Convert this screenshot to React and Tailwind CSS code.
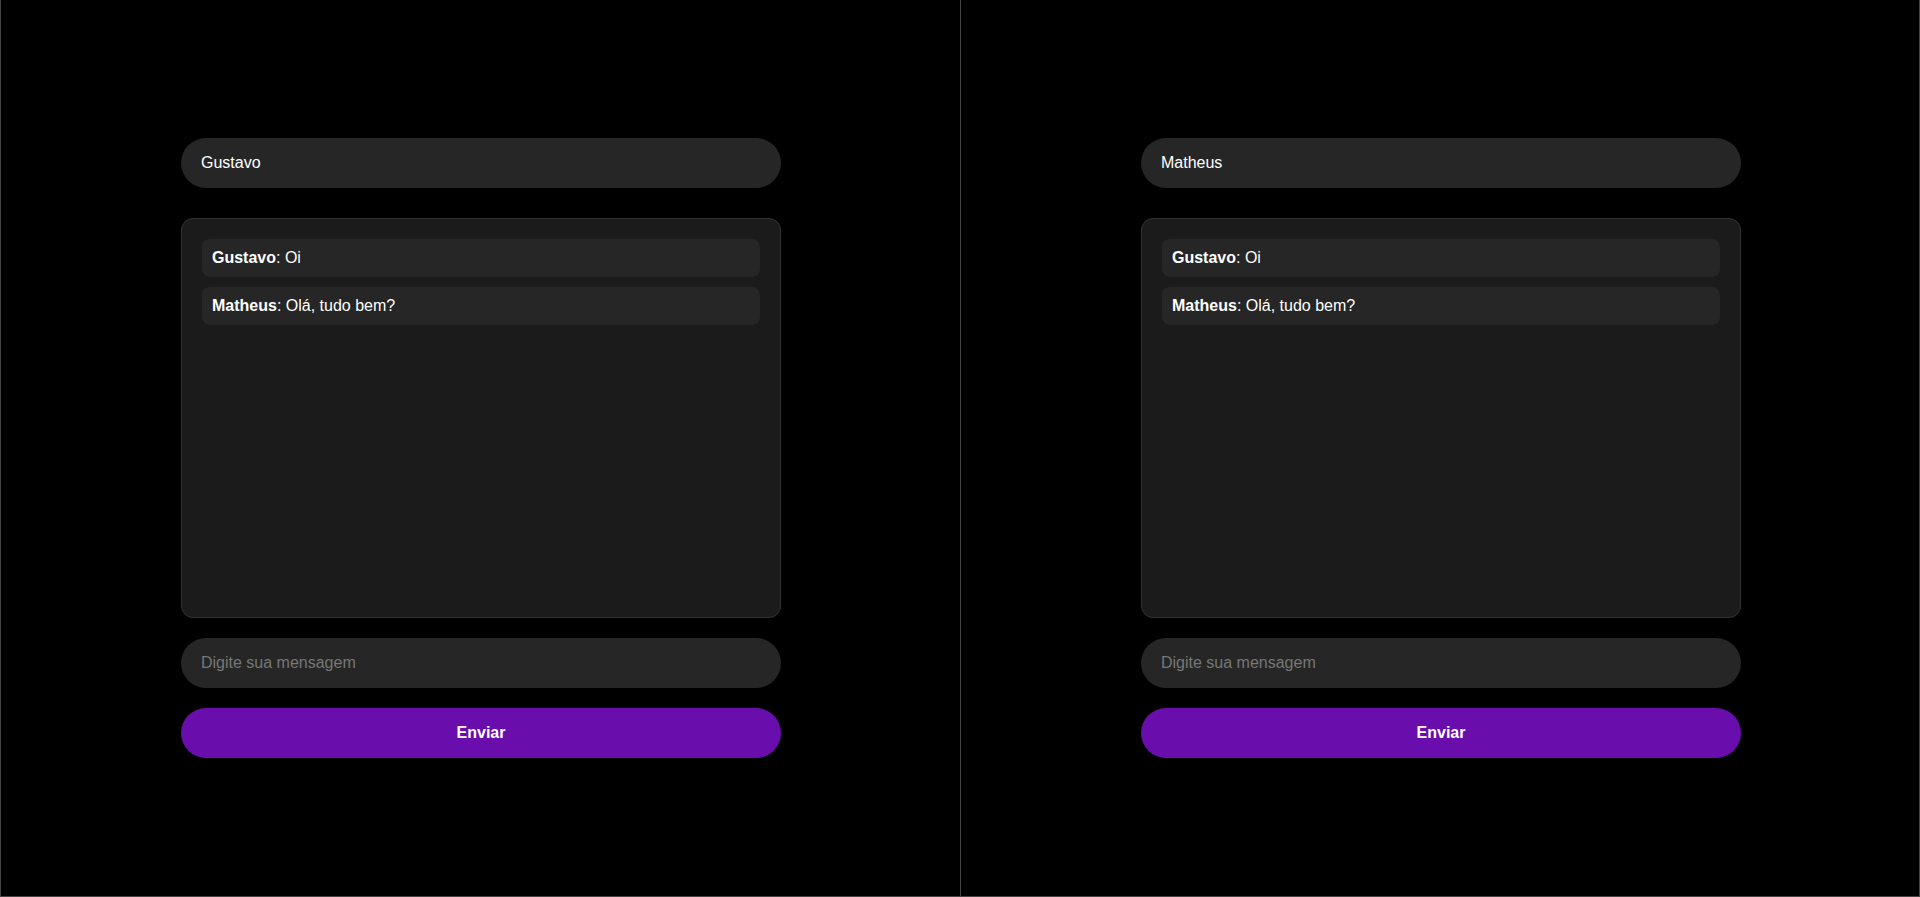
import React, { useState } from 'react'

const MESSAGES = [
  { user: 'Gustavo', text: 'Oi' },
  { user: 'Matheus', text: 'Olá, tudo bem?' },
]

function ChatPanel({ name, className }) {
  const [message, setMessage] = useState('')

  return (
    <div className={`flex h-full w-1/2 shrink-0 items-center justify-center bg-black ${className}`}>
      <div className="flex w-[600px] flex-col">
        <input
          defaultValue={name}
          className="h-[50px] w-full rounded-full bg-[#262626] px-5 text-base text-white outline-none"
        />

        {/* messages */}
        <div className="mt-[30px] flex h-[400px] flex-col gap-[10px] rounded-xl border border-[#333] bg-[#1b1b1b] p-5">
          {MESSAGES.map((msg, i) => (
            <div key={i} className="rounded-lg bg-[#262626] p-[10px] text-base leading-[18px] text-white">
              <strong>{msg.user}</strong>: {msg.text}
            </div>
          ))}
        </div>

        <input
          value={message}
          onChange={(e) => setMessage(e.target.value)}
          placeholder="Digite sua mensagem"
          className="mt-5 h-[50px] w-full rounded-full bg-[#262626] px-5 text-base text-white outline-none placeholder:text-[#777]"
        />
        <button className="mt-5 h-[50px] w-full rounded-full bg-[#6a0dad] text-base font-bold text-white">
          Enviar
        </button>
      </div>
    </div>
  )
}

export default function App() {
  return (
    <div className="flex h-[897px] w-full bg-black font-['Liberation_Sans',Arial,sans-serif]">
      <ChatPanel name="Gustavo" className="border-l border-b border-[#444] pl-px" />
      <ChatPanel name="Matheus" className="border-x border-b border-[#444] pl-[2px]" />
    </div>
  )
}
